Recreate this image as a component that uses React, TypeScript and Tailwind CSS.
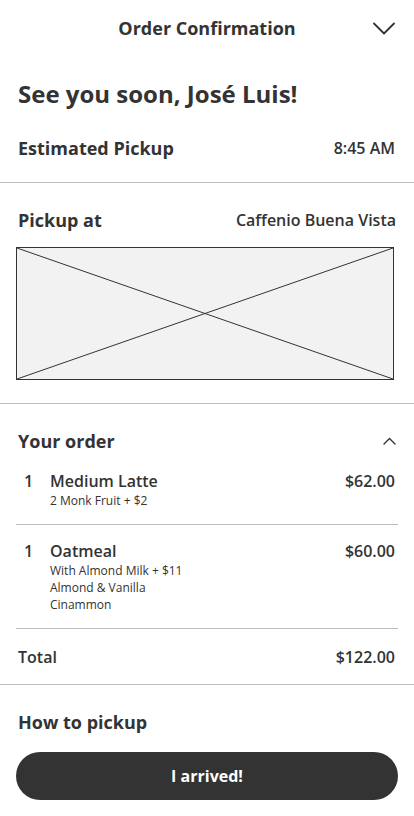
const ITEMS = [
  { qty: 1, name: 'Medium Latte', price: '$62.00', extras: ['2 Monk Fruit + $2'] },
  { qty: 1, name: 'Oatmeal', price: '$60.00', extras: ['With Almond Milk + $11', 'Almond & Vanilla', 'Cinammon'] },
]

function Row({ label, value }: { label: string; value: string }) {
  return (
    <div className="flex items-center justify-between h-[26px]">
      <span className="text-[18px] font-bold leading-[26px]">{label}</span>
      <span className="text-[16px] font-semibold leading-[26px]">{value}</span>
    </div>
  )
}

export default function App() {
  return (
    <div className="w-[414px] h-[816px] bg-white text-[#333] overflow-hidden" style={{ fontFamily: '"Open Sans", sans-serif' }}>
      <header className="relative h-[56px] flex items-center justify-center">
        <h1 className="text-[18px] font-bold">Order Confirmation</h1>
        {/* chevron down */}
        <svg className="absolute right-[19px] top-[22px]" width="22" height="13" viewBox="0 0 22 13" fill="none">
          <path d="M1 1.5 L11 11.5 L21 1.5" stroke="#333" strokeWidth="1.8" strokeLinecap="round" strokeLinejoin="round" />
        </svg>
      </header>

      <div className="px-[18px] pt-[18px] pb-[21px]">
        <h2 className="text-[24px] font-bold leading-[40px]">See you soon, José Luis!</h2>
        <div className="mt-[21px] pr-[1px]">
          <Row label="Estimated Pickup" value="8:45 AM" />
        </div>
      </div>

      <div className="h-px bg-[#bdbdbd]" />

      <div className="px-[16px] pt-[24px] pb-[23px]">
        <div className="pl-[2px] pr-[2px]">
          <Row label="Pickup at" value="Caffenio Buena Vista" />
        </div>
        <div className="mt-[14px] w-[378px] h-[133px] border border-[#333] bg-[#f2f2f2]">
          <svg className="w-full h-full block" viewBox="0 0 376 131" preserveAspectRatio="none">
            <line x1="0" y1="0" x2="376" y2="131" stroke="#333" strokeWidth="1" vectorEffect="non-scaling-stroke" />
            <line x1="376" y1="0" x2="0" y2="131" stroke="#333" strokeWidth="1" vectorEffect="non-scaling-stroke" />
          </svg>
        </div>
      </div>

      <div className="h-px bg-[#bdbdbd]" />

      <div className="px-[16px] pt-[24px]">
        <div className="flex items-center justify-between h-[26px] pl-[2px] pr-[2px]">
          <span className="text-[18px] font-bold leading-[26px]">Your order</span>
          {/* chevron up */}
          <svg width="13" height="8" viewBox="0 0 13 8" fill="none">
            <path d="M1 7 L6.5 1.5 L12 7" stroke="#333" strokeWidth="1.4" strokeLinecap="round" strokeLinejoin="round" />
          </svg>
        </div>
        <div className="mt-[14px]">
          {ITEMS.map((item) => (
            <div key={item.name} className="border-b border-[#bdbdbd] pt-[13px] pb-[15px] first:pt-0 first:pb-[15px]">
              <div className="flex items-start justify-between">
                <div className="flex">
                  <span className="w-[34px] pl-[8px] text-[16px] font-semibold leading-[26px]">{item.qty}</span>
                  <div>
                    <div className="text-[16px] font-semibold leading-[26px] mb-[-2px]">{item.name}</div>
                    {item.extras.map((e) => (
                      <div key={e} className="text-[12px] leading-[17px]">{e}</div>
                    ))}
                  </div>
                </div>
                <span className="text-[16px] font-semibold leading-[26px] pr-[3px]">{item.price}</span>
              </div>
            </div>
          ))}
        </div>
        <div className="flex items-center justify-between h-[55px] pl-[2px] pr-[3px]">
          <span className="text-[16px] font-semibold">Total</span>
          <span className="text-[16px] font-semibold">$122.00</span>
        </div>
      </div>

      <div className="h-px bg-[#bdbdbd]" />

      <div className="px-[16px] pt-[24px]">
        <div className="pl-[2px] text-[18px] font-bold leading-[26px]">How to pickup</div>
        <button className="mt-[17px] w-full h-[48px] rounded-full bg-[#333] text-white text-[16px] font-bold">
          I arrived!
        </button>
      </div>
    </div>
  )
}
